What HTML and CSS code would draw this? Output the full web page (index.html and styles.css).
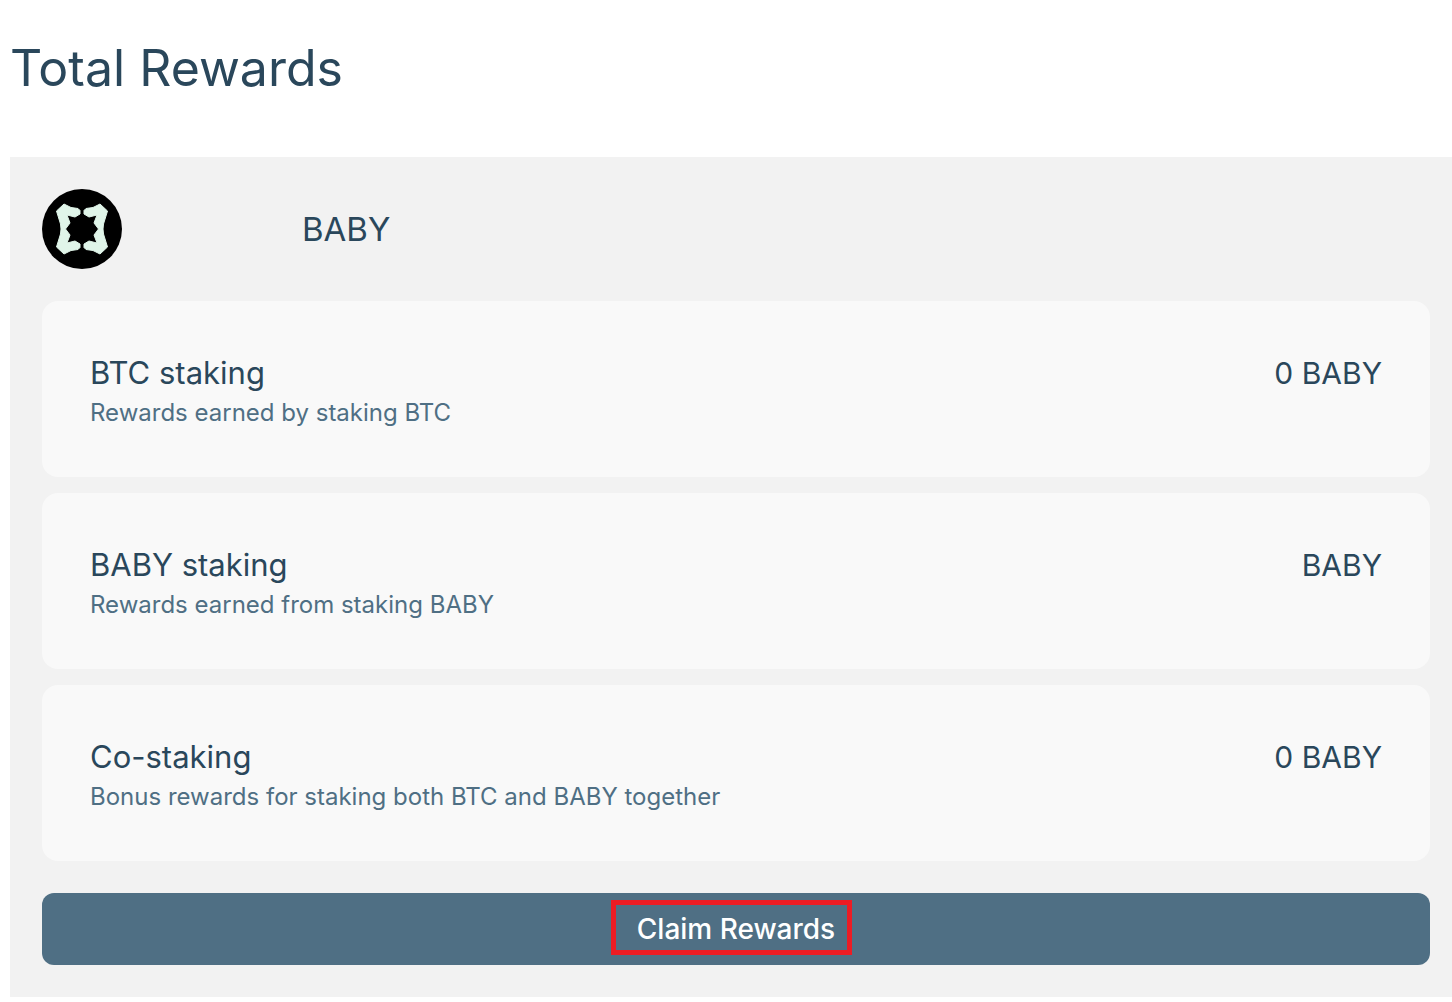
FILE: index.html
```html
<!DOCTYPE html>
<html lang="en">
<head>
<meta charset="utf-8">
<title>Total Rewards</title>
<link rel="stylesheet" href="styles.css">
</head>
<body>
<main class="page">
  <h1 class="title">Total Rewards</h1>
  <section class="panel">
    <header class="token">
      <svg class="token-logo" viewBox="0 0 80 80" aria-hidden="true">
        <circle cx="40" cy="40" r="40" fill="#000"/>
        <g id="bracket" fill="#e0f5e9" stroke="#e0f5e9" stroke-width="1" stroke-linejoin="round">
          <path d="M22 15L29 18.5L36 19.5L38 21.5L38 25L33 28L25 26L28 34L23.5 40L28 46L25 54L33 52L38 55L38 58.5L36 60.5L29 61.5L22 65L14.5 58L18.5 45L19 40L18.5 35L14.5 22Z"/>
        </g>
        <use href="#bracket" transform="translate(80 0) scale(-1 1)"/>
      </svg>
      <h2 class="token-name">BABY</h2>
    </header>
    <ul class="rewards">
      <li class="reward">
        <div>
          <h3 class="reward-name">BTC staking</h3>
          <p class="reward-note">Rewards earned by staking BTC</p>
        </div>
        <span class="reward-amount">0 BABY</span>
      </li>
      <li class="reward">
        <div>
          <h3 class="reward-name">BABY staking</h3>
          <p class="reward-note">Rewards earned from staking BABY</p>
        </div>
        <span class="reward-amount">BABY</span>
      </li>
      <li class="reward">
        <div>
          <h3 class="reward-name">Co-staking</h3>
          <p class="reward-note">Bonus rewards for staking both BTC and BABY together</p>
        </div>
        <span class="reward-amount">0 BABY</span>
      </li>
    </ul>
    <button class="claim" type="button">Claim Rewards</button>
  </section>
</main>
</body>
</html>
```
FILE: styles.css
```css
*, *::after { box-sizing: border-box; }
body {
  margin: 0;
  background: #fff;
  color: #2a475b;
  font-family: Inter, "Open Sans", sans-serif;
}
h1, h2, h3, p, ul { margin: 0; padding: 0; font-weight: 400; }
.page { padding: 32px 0 5px 10px; }
.title { margin-bottom: 53px; font-size: 50px; line-height: 72px; }
.panel { padding: 32px 22px 32px 32px; background: #f2f2f2; }
.token { display: flex; align-items: center; gap: 180px; margin-bottom: 32px; }
.token-logo { width: 80px; height: 80px; }
.token-name { font-size: 33px; line-height: 48px; }
.rewards { display: grid; gap: 16px; margin-bottom: 32px; list-style: none; }
.reward {
  display: flex;
  justify-content: space-between;
  padding: 48px;
  border-radius: 16px;
  background: #f9f9f9;
}
.reward-name { font-size: 31px; line-height: 48px; }
.reward-amount { font-size: 30px; line-height: 48px; }
.reward-note { color: #4f6f84; font-size: 24px; line-height: 32px; }
.claim {
  position: relative;
  display: block;
  width: 100%;
  height: 72px;
  padding: 0;
  border: 0;
  border-radius: 12px;
  background: #4f6f84;
  color: #fff;
  font: 500 28px/72px Inter, "Open Sans", sans-serif;
}
/* Highlight frame laid over the label */
.claim::after {
  content: "";
  position: absolute;
  top: 7px;
  left: calc(50% - 125px);
  width: 241px;
  height: 55px;
  border: 5px solid #ec1c24;
  pointer-events: none;
}
```
